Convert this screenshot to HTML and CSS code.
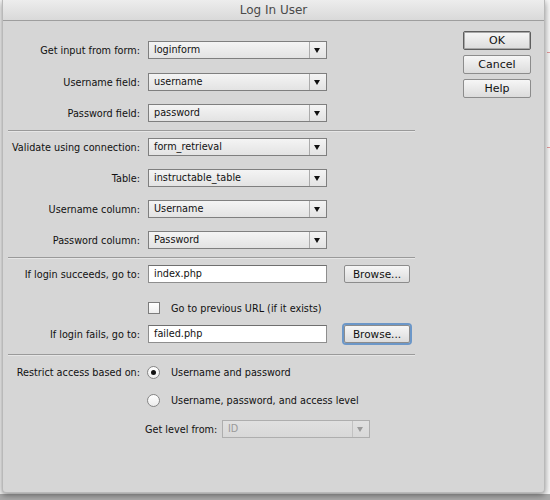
FILE: index.html
```html
<!DOCTYPE html>
<html>
<head>
<meta charset="utf-8">
<link rel="stylesheet" href="styles.css">
</head>
<body>
<div class="window">
  <div class="titlebar">Log In User</div>
  <div class="content">
    <div class="form">
      <div class="section s1">
        <div class="row"><span class="lbl">Get input from form:</span><div class="select"><span class="val">loginform</span><span class="arrow"></span></div></div>
        <div class="row r-extra"><span class="lbl">Username field:</span><div class="select"><span class="val">username</span><span class="arrow"></span></div></div>
        <div class="row"><span class="lbl">Password field:</span><div class="select"><span class="val">password</span><span class="arrow"></span></div></div>
      </div>
      <div class="sep"></div>
      <div class="section s2">
        <div class="row"><span class="lbl">Validate using connection:</span><div class="select"><span class="val">form_retrieval</span><span class="arrow"></span></div></div>
        <div class="row"><span class="lbl">Table:</span><div class="select"><span class="val">instructable_table</span><span class="arrow"></span></div></div>
        <div class="row"><span class="lbl">Username column:</span><div class="select"><span class="val">Username</span><span class="arrow"></span></div></div>
        <div class="row"><span class="lbl">Password column:</span><div class="select"><span class="val">Password</span><span class="arrow"></span></div></div>
      </div>
      <div class="sep"></div>
      <div class="section s3">
        <div class="row"><span class="lbl">If login succeeds, go to:</span><div class="input">index.php</div><div class="btn browse">Browse...</div></div>
        <div class="row check-row"><span class="lbl"></span><span class="checkbox"></span><span class="opt">Go to previous URL (if it exists)</span></div>
        <div class="row fail-row"><span class="lbl">If login fails, go to:</span><div class="input">failed.php</div><div class="btn browse focus">Browse...</div></div>
      </div>
      <div class="sep sep3"></div>
      <div class="section s4">
        <div class="row"><span class="lbl">Restrict access based on:</span><span class="radio checked"></span><span class="opt">Username and password</span></div>
        <div class="row r2"><span class="lbl"></span><span class="radio"></span><span class="opt">Username, password, and access level</span></div>
        <div class="row r3"><span class="lbl"></span><span class="sublbl">Get level from:</span><div class="select disabled"><span class="val">ID</span><span class="arrow"></span></div></div>
      </div>
    </div>
    <div class="buttons">
      <div class="btn dlg default">OK</div>
      <div class="btn dlg">Cancel</div>
      <div class="btn dlg">Help</div>
    </div>
  </div>
</div>
</body>
</html>
```

FILE: styles.css
```css
html, body {
  margin: 0;
  padding: 0;
}
body {
  width: 550px;
  height: 500px;
  overflow: hidden;
  background:
    linear-gradient(#e79a9a, #e79a9a) 547px 52px / 3px 1px no-repeat,
    linear-gradient(#e79a9a, #e79a9a) 547px 147px / 3px 1px no-repeat,
    linear-gradient(#a9a9a9, #a9a9a9) 0 494px / 550px 6px no-repeat,
    #f7f7f7;
  font-family: "DejaVu Sans", "Liberation Sans", sans-serif;
  font-size: 9.7px;
  color: #111;
}
.window {
  margin-left: 2px;
  width: 543px;
  height: 493px;
  border: 1px solid #b9b9b9;
  border-top: none;
  border-radius: 0 0 4px 4px;
  background: #d6d6d6;
  box-shadow: 0 2px 6px rgba(0, 0, 0, 0.45);
  box-sizing: border-box;
}
.titlebar {
  height: 21px;
  box-sizing: border-box;
  border-bottom: 1px solid #9e9e9e;
  background: linear-gradient(#ededed, #d9d9d9);
  text-align: center;
  font-size: 12px;
  line-height: 20px;
  color: #4a4a4a;
}
.content {
  display: flex;
}
.form {
  margin-left: 5px;
  width: 407px;
}
.section {
  display: flex;
  flex-direction: column;
}
.s1 { padding-top: 20px; gap: 13px; }
.r-extra { margin-top: 1px; }
.s2 { padding-top: 6px; gap: 13px; }
.s3 { padding-top: 6px; }
.s4 { padding-top: 7px; }
.row {
  display: flex;
  align-items: center;
  height: 18px;
}
.lbl {
  width: 132px;
  margin-right: 8px;
  text-align: right;
  white-space: nowrap;
  flex: none;
}
.sep {
  margin-top: 8px;
  height: 1px;
  background: #9a9a9a;
  border-bottom: 1px solid #e6e6e6;
}
.sep3 { margin-top: 11px; }
.select {
  width: 179px;
  height: 18px;
  box-sizing: border-box;
  border: 1px solid #7f7f7f;
  background: linear-gradient(#f4f4f4, #e3e3e3);
  display: flex;
  align-items: center;
}
.select .val {
  flex: 1;
  padding-left: 5px;
  line-height: 16px;
}
.select .arrow {
  width: 17px;
  height: 16px;
  border-left: 1px solid #ababab;
  box-sizing: border-box;
  position: relative;
}
.select .arrow::after {
  content: "";
  position: absolute;
  left: 4px;
  top: 6px;
  border-left: 3.5px solid transparent;
  border-right: 3.5px solid transparent;
  border-top: 5px solid #111;
}
.select.disabled {
  width: 148px;
  border-color: #aeaeae;
  background: linear-gradient(#e0e0e0, #d8d8d8);
  color: #9a9a9a;
}
.select.disabled .arrow { border-left-color: #c2c2c2; }
.select.disabled .arrow::after { border-top-color: #9a9a9a; }
.input {
  width: 179px;
  height: 18px;
  box-sizing: border-box;
  border: 1px solid #8e8e8e;
  border-top-color: #6f6f6f;
  background: #fff;
  padding-left: 5px;
  line-height: 16px;
}
.btn {
  box-sizing: border-box;
  border: 1px solid #8c8c8c;
  border-radius: 2px;
  background: linear-gradient(#f6f6f6, #dcdcdc);
  text-align: center;
  font-size: 10.5px;
}
.browse {
  margin-left: 17px;
  width: 66px;
  height: 18px;
  line-height: 16px;
}
.browse.focus {
  box-shadow: 0 0 0 2px #6c97c8;
}
.check-row {
  margin-top: 16px;
}
.fail-row {
  margin-top: 8px;
}
.checkbox {
  width: 12px;
  height: 12px;
  box-sizing: border-box;
  border: 1px solid #7c7c7c;
  background: linear-gradient(#fff, #efefef);
  flex: none;
}
.opt {
  margin-left: 11px;
  white-space: nowrap;
}
.radio {
  width: 13px;
  height: 13px;
  margin-left: -1px;
  box-sizing: border-box;
  border: 1px solid #858585;
  border-radius: 50%;
  background: linear-gradient(#fff, #ececec);
  flex: none;
  position: relative;
}
.radio.checked::after {
  content: "";
  position: absolute;
  left: 3px;
  top: 3px;
  width: 5px;
  height: 5px;
  border-radius: 50%;
  background: #111;
}
.r2 { margin-top: 10px; }
.r3 { margin-top: 11px; }
.sublbl {
  margin-left: -3px;
  width: 77px;
  white-space: nowrap;
  flex: none;
}
.buttons {
  margin-left: 48px;
  padding-top: 10px;
  display: flex;
  flex-direction: column;
  gap: 5px;
}
.dlg {
  width: 68px;
  height: 19px;
  line-height: 17px;
  font-size: 11px;
}
.dlg.default {
  border-color: #5e5e5e;
  box-shadow: inset 0 0 0 1px #a8a8a8;
}
```
